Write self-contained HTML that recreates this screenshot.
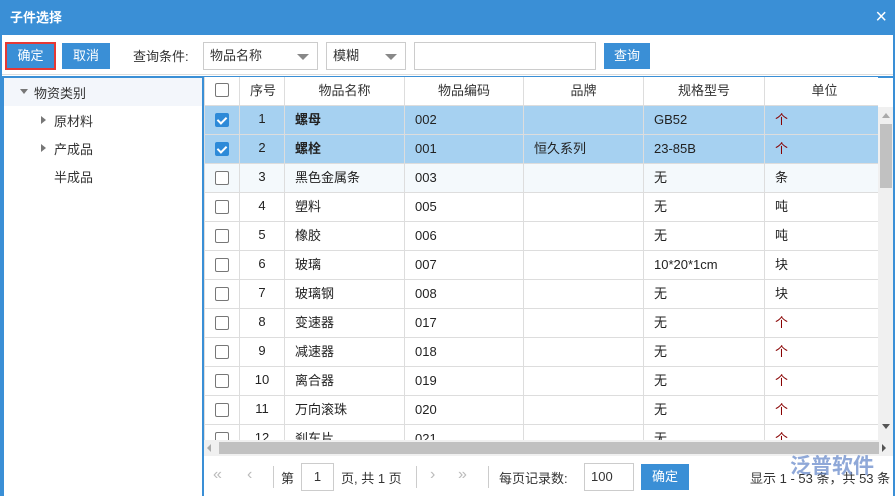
<!DOCTYPE html><html><head><meta charset="utf-8"><style>
*{margin:0;padding:0;box-sizing:border-box}
body{width:895px;height:496px;overflow:hidden;background:#fff;font-family:"Liberation Sans","Noto Sans CJK SC",sans-serif;font-size:13px;color:#333;position:relative}
.a{position:absolute}
.title{left:0;top:0;width:895px;height:35px;background:#3a8fd6;color:#fff;font-weight:bold;font-size:13px;line-height:35px;padding-left:10px}
.btn{background:#3a8fd6;color:#fff;text-align:center;line-height:26px;height:26px}
.sel{border:1px solid #ccc;height:28px;line-height:26px;padding-left:6px;color:#333}
.tri{position:absolute;right:8px;top:11px;width:0;height:0;border-left:6px solid transparent;border-right:6px solid transparent;border-top:6px solid #888}
table{border-collapse:collapse;table-layout:fixed}
td{border:1px solid #ddd;height:29px;padding:0 10px;white-space:nowrap;overflow:hidden;color:#222;line-height:26px;vertical-align:top;padding-top:1px}
.c{text-align:center;padding:0}
.hd td{text-align:center;color:#333;background:#fff;height:28px;line-height:25px}
tr.s td{background:#a6d1f1}
tr.s td.n{font-weight:bold}
.cb{display:inline-block;width:14px;height:14px;border:1px solid #777;border-radius:2px;background:#fff;vertical-align:top;margin-top:7px}
.hd .cb{margin-top:6px}
.ck{background:#2d8ad8;border-color:#2d8ad8;position:relative}
.ck:after{content:"";position:absolute;left:3px;top:1px;width:4px;height:7px;border:solid #fff;border-width:0 2px 2px 0;transform:rotate(45deg)}
.r{color:#800}
.ft{color:#333;font-size:13px}
</style></head><body>
<div class="a title">子件选择<span style="position:absolute;right:8px;top:0;font-weight:normal;font-size:20px">×</span></div>
<div class="a" style="left:0;top:35px;width:2px;height:461px;background:#3a8fd6"></div>
<div class="a" style="left:893px;top:35px;width:2px;height:461px;background:#3a8fd6"></div>
<div class="a btn" style="left:5px;top:42px;width:51px;height:28px;border:2px solid #e53935;line-height:24px">确定</div>
<div class="a btn" style="left:62px;top:43px;width:48px">取消</div>
<div class="a" style="left:133px;top:46px">查询条件:</div>
<div class="a sel" style="left:203px;top:42px;width:115px">物品名称<span class="tri"></span></div>
<div class="a sel" style="left:326px;top:42px;width:80px">模糊<span class="tri"></span></div>
<div class="a sel" style="left:414px;top:42px;width:182px"></div>
<div class="a btn" style="left:604px;top:43px;width:46px">查询</div>
<div class="a" style="left:2px;top:74px;width:891px;height:1px;background:#ddd"></div>
<div class="a" style="left:2px;top:76px;width:202px;height:420px;border:2px solid #3a8fd6;border-bottom:none"></div>
<div class="a" style="left:4px;top:78px;width:198px;height:28px;background:#f3f6fb"></div>
<div class="a" style="left:20px;top:89px;border-left:4px solid transparent;border-right:4px solid transparent;border-top:5px solid #777"></div>
<div class="a" style="left:34px;top:83px">物资类别</div>
<div class="a" style="left:41px;top:116px;border-top:4px solid transparent;border-bottom:4px solid transparent;border-left:5px solid #777"></div>
<div class="a" style="left:54px;top:111px">原材料</div>
<div class="a" style="left:41px;top:144px;border-top:4px solid transparent;border-bottom:4px solid transparent;border-left:5px solid #777"></div>
<div class="a" style="left:54px;top:139px">产成品</div>
<div class="a" style="left:54px;top:167px">半成品</div>
<div class="a" style="left:204px;top:76px;width:689px;height:2px;background:#3a8fd6"></div>
<div class="a" style="left:204px;top:77px;width:674px;height:363px;overflow:hidden">
<table style="width:680px">
<colgroup><col style="width:35px"><col style="width:45px"><col style="width:120px"><col style="width:119px"><col style="width:120px"><col style="width:121px"><col style="width:120px"></colgroup>
<tr class="hd"><td class="c" style="border-top:none"><span class="cb"></span></td><td style="border-top:none">序号</td><td style="border-top:none">物品名称</td><td style="border-top:none">物品编码</td><td style="border-top:none">品牌</td><td style="border-top:none">规格型号</td><td style="border-top:none">单位</td></tr>
<tr class="s"><td class="c"><span class="cb ck"></span></td><td class="c">1</td><td class="n">螺母</td><td>002</td><td></td><td>GB52</td><td class="r">个</td></tr>
<tr class="s"><td class="c"><span class="cb ck"></span></td><td class="c">2</td><td class="n">螺栓</td><td>001</td><td>恒久系列</td><td>23-85B</td><td class="r">个</td></tr>
<tr style="background:#f4f9fc"><td class="c"><span class="cb"></span></td><td class="c">3</td><td>黑色金属条</td><td>003</td><td></td><td>无</td><td>条</td></tr>
<tr><td class="c"><span class="cb"></span></td><td class="c">4</td><td>塑料</td><td>005</td><td></td><td>无</td><td>吨</td></tr>
<tr><td class="c"><span class="cb"></span></td><td class="c">5</td><td>橡胶</td><td>006</td><td></td><td>无</td><td>吨</td></tr>
<tr><td class="c"><span class="cb"></span></td><td class="c">6</td><td>玻璃</td><td>007</td><td></td><td>10*20*1cm</td><td>块</td></tr>
<tr><td class="c"><span class="cb"></span></td><td class="c">7</td><td>玻璃钢</td><td>008</td><td></td><td>无</td><td>块</td></tr>
<tr><td class="c"><span class="cb"></span></td><td class="c">8</td><td>变速器</td><td>017</td><td></td><td>无</td><td class="r">个</td></tr>
<tr><td class="c"><span class="cb"></span></td><td class="c">9</td><td>减速器</td><td>018</td><td></td><td>无</td><td class="r">个</td></tr>
<tr><td class="c"><span class="cb"></span></td><td class="c">10</td><td>离合器</td><td>019</td><td></td><td>无</td><td class="r">个</td></tr>
<tr><td class="c"><span class="cb"></span></td><td class="c">11</td><td>万向滚珠</td><td>020</td><td></td><td>无</td><td class="r">个</td></tr>
<tr><td class="c"><span class="cb"></span></td><td class="c">12</td><td>刹车片</td><td>021</td><td></td><td>无</td><td class="r">个</td></tr>
</table></div>
<div class="a" style="left:878px;top:107px;width:15px;height:333px;background:#f0f0f0"></div>
<div class="a" style="left:880px;top:124px;width:12px;height:64px;background:#c1c1c1"></div>
<div class="a" style="left:882px;top:113px;border-left:4px solid transparent;border-right:4px solid transparent;border-bottom:5px solid #aaa"></div>
<div class="a" style="left:204px;top:440px;width:689px;height:16px;background:#f0f0f0"></div>
<div class="a" style="left:219px;top:442px;width:660px;height:12px;background:#c1c1c1"></div>
<div class="a" style="left:207px;top:444px;border-top:4px solid transparent;border-bottom:4px solid transparent;border-right:4px solid #aaa"></div>
<div class="a" style="left:882px;top:444px;border-top:4px solid transparent;border-bottom:4px solid transparent;border-left:4px solid #555"></div>
<div class="a" style="left:882px;top:424px;border-left:4px solid transparent;border-right:4px solid transparent;border-top:5px solid #555"></div>
<div class="a ft" style="left:213px;top:466px;color:#bbb;font-size:16px">«</div>
<div class="a ft" style="left:247px;top:466px;color:#bbb;font-size:16px">‹</div>
<div class="a" style="left:273px;top:466px;width:1px;height:22px;background:#ccc"></div>
<div class="a ft" style="left:281px;top:468px">第</div>
<div class="a sel" style="left:301px;top:463px;width:33px;text-align:center;padding:0">1</div>
<div class="a ft" style="left:341px;top:468px">页, 共 1 页</div>
<div class="a" style="left:416px;top:466px;width:1px;height:22px;background:#ccc"></div>
<div class="a ft" style="left:430px;top:466px;color:#bbb;font-size:16px">›</div>
<div class="a ft" style="left:458px;top:466px;color:#bbb;font-size:16px">»</div>
<div class="a" style="left:488px;top:466px;width:1px;height:22px;background:#ccc"></div>
<div class="a ft" style="left:499px;top:468px">每页记录数:</div>
<div class="a sel" style="left:584px;top:463px;width:50px">100</div>
<div class="a btn" style="left:641px;top:464px;width:48px;height:26px">确定</div>
<div class="a ft" style="left:750px;top:468px">显示 1 - 53 条，共 53 条</div>
<div class="a" style="left:790px;top:450px;color:#6a8ccc;font-size:21px;font-weight:bold;opacity:.75">泛普软件</div>
</body></html>
